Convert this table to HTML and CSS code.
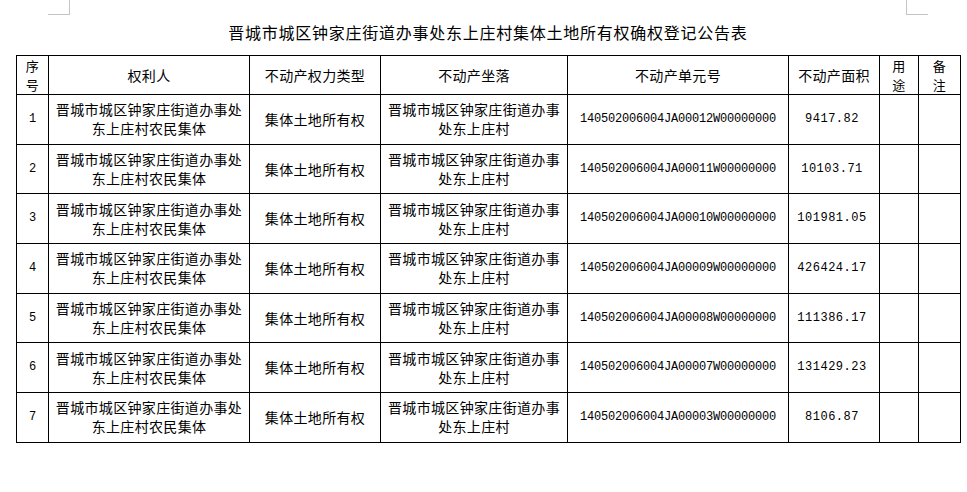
FILE: index.html
```html
<!DOCTYPE html>
<html lang="zh-CN">
<head>
<meta charset="utf-8">
<title>集体土地所有权确权登记公告表</title>
<link rel="stylesheet" href="styles.css">
</head>
<body>
<div class="page">
  <span class="mark mark-tl"></span>
  <span class="mark mark-tr"></span>
  <h1 class="title">晋城市城区钟家庄街道办事处东上庄村集体土地所有权确权登记公告表</h1>
  <table class="notice">
    <colgroup>
      <col class="c-no">
      <col class="c-owner">
      <col class="c-type">
      <col class="c-loc">
      <col class="c-unit">
      <col class="c-area">
      <col class="c-use">
      <col class="c-note">
    </colgroup>
    <thead>
      <tr>
        <th><span class="stack">序</span><span class="stack">号</span></th>
        <th>权利人</th>
        <th>不动产权力类型</th>
        <th>不动产坐落</th>
        <th>不动产单元号</th>
        <th>不动产面积</th>
        <th><span class="stack">用</span><span class="stack">途</span></th>
        <th><span class="stack">备</span><span class="stack">注</span></th>
      </tr>
    </thead>
    <tbody>
      <tr>
        <td class="num">1</td>
        <td>晋城市城区钟家庄街道办事处<br>东上庄村农民集体</td>
        <td>集体土地所有权</td>
        <td>晋城市城区钟家庄街道办事<br>处东上庄村</td>
        <td class="num">140502006004JA00012W00000000</td>
        <td class="num area">9417.82</td>
        <td></td>
        <td></td>
      </tr>
      <tr>
        <td class="num">2</td>
        <td>晋城市城区钟家庄街道办事处<br>东上庄村农民集体</td>
        <td>集体土地所有权</td>
        <td>晋城市城区钟家庄街道办事<br>处东上庄村</td>
        <td class="num">140502006004JA00011W00000000</td>
        <td class="num area">10103.71</td>
        <td></td>
        <td></td>
      </tr>
      <tr>
        <td class="num">3</td>
        <td>晋城市城区钟家庄街道办事处<br>东上庄村农民集体</td>
        <td>集体土地所有权</td>
        <td>晋城市城区钟家庄街道办事<br>处东上庄村</td>
        <td class="num">140502006004JA00010W00000000</td>
        <td class="num area">101981.05</td>
        <td></td>
        <td></td>
      </tr>
      <tr>
        <td class="num">4</td>
        <td>晋城市城区钟家庄街道办事处<br>东上庄村农民集体</td>
        <td>集体土地所有权</td>
        <td>晋城市城区钟家庄街道办事<br>处东上庄村</td>
        <td class="num">140502006004JA00009W00000000</td>
        <td class="num area">426424.17</td>
        <td></td>
        <td></td>
      </tr>
      <tr>
        <td class="num">5</td>
        <td>晋城市城区钟家庄街道办事处<br>东上庄村农民集体</td>
        <td>集体土地所有权</td>
        <td>晋城市城区钟家庄街道办事<br>处东上庄村</td>
        <td class="num">140502006004JA00008W00000000</td>
        <td class="num area">111386.17</td>
        <td></td>
        <td></td>
      </tr>
      <tr>
        <td class="num">6</td>
        <td>晋城市城区钟家庄街道办事处<br>东上庄村农民集体</td>
        <td>集体土地所有权</td>
        <td>晋城市城区钟家庄街道办事<br>处东上庄村</td>
        <td class="num">140502006004JA00007W00000000</td>
        <td class="num area">131429.23</td>
        <td></td>
        <td></td>
      </tr>
      <tr>
        <td class="num">7</td>
        <td>晋城市城区钟家庄街道办事处<br>东上庄村农民集体</td>
        <td>集体土地所有权</td>
        <td>晋城市城区钟家庄街道办事<br>处东上庄村</td>
        <td class="num">140502006004JA00003W00000000</td>
        <td class="num area">8106.87</td>
        <td></td>
        <td></td>
      </tr>
    </tbody>
  </table>
</div>
</body>
</html>
```

FILE: styles.css
```css
html, body {
  margin: 0;
  background: #ffffff;
}

body {
  font-family: "Noto Sans CJK SC", "Noto Sans CJK TC", sans-serif;
  color: #000000;
}

.page {
  position: relative;
  height: 492px;
}

.mark {
  position: absolute;
  top: 0;
  width: 21px;
  height: 14px;
  border: 0 solid #c4c4c4;
}

.mark-tl {
  left: 48px;
  border-right-width: 1px;
  border-bottom-width: 1px;
}

.mark-tr {
  left: 906px;
  border-left-width: 1px;
  border-bottom-width: 1px;
}

.title {
  margin: 0 0 0 16px;
  width: 944px;
  height: 34px;
  padding-top: 21px;
  font-size: 16px;
  line-height: 22px;
  font-weight: normal;
  letter-spacing: 0.75px;
  text-align: center;
}

.notice {
  margin-left: 16px;
  width: 944px;
  border-collapse: collapse;
  table-layout: fixed;
}

.c-no { width: 32px; }
.c-owner { width: 201px; }
.c-type { width: 131px; }
.c-loc { width: 187px; }
.c-unit { width: 221px; }
.c-area { width: 91px; }
.c-use { width: 39px; }
.c-note { width: 42px; }

.notice th,
.notice td {
  border: 1px solid #000000;
  padding: 0;
  text-align: center;
  vertical-align: middle;
  font-size: 14px;
  font-weight: normal;
  letter-spacing: 0.33px;
  line-height: 19px;
  white-space: nowrap;
}

.stack {
  display: block;
  font-size: 13px;
  line-height: 19px;
}

.notice thead tr {
  height: 39px;
}

.notice tbody tr {
  height: 49.7px;
}

.notice td.num {
  font-family: "Liberation Mono", "DejaVu Sans Mono", monospace;
  font-size: 12px;
  letter-spacing: -0.2px;
}

.notice td.area {
  letter-spacing: 0.5px;
  padding-right: 4px;
}
```
